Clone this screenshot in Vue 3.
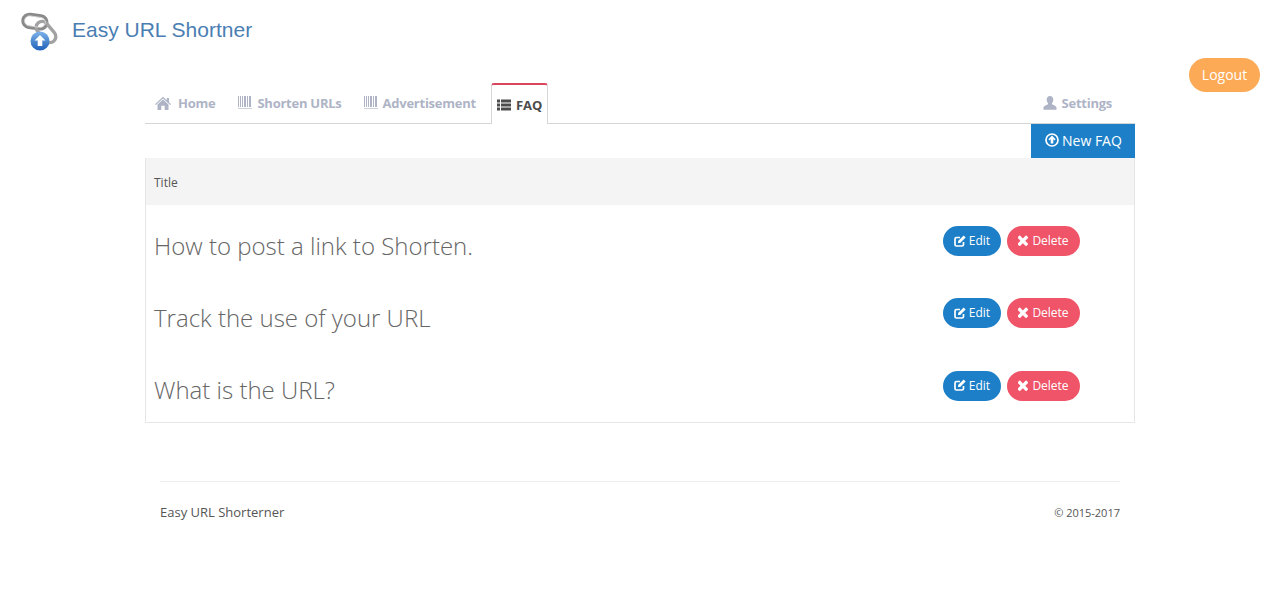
<script setup>
const tabs = [
  { label: 'Home', icon: 'home' },
  { label: 'Shorten URLs', icon: 'barcode' },
  { label: 'Advertisement', icon: 'barcode' },
  { label: 'FAQ', icon: 'list', active: true }
]

const faqs = ['How to post a link to Shorten.', 'Track the use of your URL', 'What is the URL?']

const bars = [
  [0, 1], [2, 1], [4, 1], [6, 2], [9, 1], [11, 2]
]
</script>

<template>
  <div class="page">
    <header class="brand">
      <svg class="logo" width="42" height="42" viewBox="0 0 42 42">
        <defs>
          <linearGradient id="ball" x1="0" y1="0" x2="0" y2="1">
            <stop offset="0" stop-color="#7fb2e8" />
            <stop offset="1" stop-color="#1e62b8" />
          </linearGradient>
        </defs>
        <rect x="3" y="4" width="24" height="13" rx="6.500" transform="rotate(8 14 10)" fill="none" stroke="#8a8a8a" stroke-width="3.400" />
        <rect x="14" y="15" width="24" height="12" rx="6" transform="rotate(50 26 21)" fill="none" stroke="#a2a2a2" stroke-width="3.400" />
        <rect x="4.500" y="5.500" width="21" height="10" rx="5" transform="rotate(8 14 10)" fill="none" stroke="#d8d8d8" stroke-width="0.800" />
        <circle cx="20" cy="30" r="9.500" fill="url(#ball)" />
        <path d="M20 24l5.500 5.500h-3.200V35h-4.600v-5.500H14.500z" fill="#fff" />
      </svg>
      <span class="brand-name">Easy URL Shortner</span>
    </header>

    <div class="layout">
      <div class="side"></div>
      <main class="main">
        <nav class="tabs">
          <a v-for="tab in tabs" :key="tab.label" class="tab" :class="{ active: tab.active, first: tab.icon === 'home' }">
            <svg v-if="tab.icon === 'home'" class="ico home" width="16" height="14" viewBox="0 0 16 14">
              <path fill="currentColor" d="M8 .8l3.800 3.500V2h2.200v4.300L16 8.200l-.8.800L8 2.600.8 9 0 8.200z" />
              <path fill="currentColor" d="M8 3.600l5.500 5V14H9.700V9.800H6.300V14H2.500V8.600z" />
            </svg>
            <svg v-else-if="tab.icon === 'barcode'" class="ico" width="14" height="14" viewBox="0 0 14 14">
              <rect v-for="b in bars" :key="b[0]" :x="b[0]" y="0" :width="b[1]" height="11" fill="currentColor" />
              <rect y="12" width="14" height="1" fill="currentColor" opacity="0.6" />
            </svg>
            <svg v-else class="ico" width="14" height="14" viewBox="0 0 14 14">
              <path fill="currentColor" d="M0 1.500h3v3H0zM4 1.500h10v3H4zM0 5.500h3v3H0zM4 5.500h10v3H4zM0 9.500h3v3H0zM4 9.500h10v3H4z" />
            </svg>
            {{ tab.label }}
          </a>
          <a class="tab settings">
            <svg class="ico" width="14" height="14" viewBox="0 0 14 14">
              <path fill="currentColor" d="M7 0c2 0 3.300 1.600 3.300 3.800 0 1.500-.6 2.800-1.300 3.500v1c1 .8 4.500 1.500 4.500 3.300v2.200H.5v-2.200c0-1.800 3.500-2.500 4.500-3.300v-1C4.300 6.600 3.700 5.300 3.700 3.800 3.700 1.600 5 0 7 0z" />
            </svg>
            Settings
          </a>
        </nav>

        <div class="actions">
          <button class="new-btn">
            <svg width="14" height="14" viewBox="0 0 14 14">
              <circle cx="7" cy="7" r="6" fill="none" stroke="currentColor" stroke-width="1.700" />
              <path fill="currentColor" d="M7 2.600l3.600 3.700-1.100 1.100-1.200-1.200v4.200H5.700V6.200L4.500 7.400 3.400 6.300z" />
            </svg>
            New FAQ
          </button>
        </div>

        <div class="table">
          <div class="thead">Title</div>
          <div v-for="faq in faqs" :key="faq" class="row">
            <div class="title">{{ faq }}</div>
            <div class="row-actions">
              <button class="pill edit">
                <svg width="12" height="12" viewBox="0 0 12 12">
                  <path fill="none" stroke="currentColor" stroke-width="1.700" d="M9.500 7v2.500a1.500 1.500 0 0 1-1.500 1.500H2.500A1.500 1.500 0 0 1 1 9.500V4a1.500 1.500 0 0 1 1.500-1.500H6" />
                  <path fill="currentColor" d="M9.600 .6l2 2-5.500 5.500H4.100V6.100z" />
                </svg>
                Edit
              </button>
              <button class="pill del">
                <svg width="11" height="11" viewBox="200 300 1150 1250">
                  <path fill="currentColor" d="M1298 1322q0 40-28 68l-136 136q-28 28-68 28t-68-28l-294-294-294 294q-28 28-68 28t-68-28l-136-136q-28-28-28-68t28-68l294-294-294-294q-28-28-28-68t28-68l136-136q28-28 68-28t68 28l294 294 294-294q28-28 68-28t68 28l136 136q28 28 28 68t-28 68l-294 294 294 294q28 28 28 68z" />
                </svg>
                Delete
              </button>
            </div>
          </div>
        </div>

        <footer class="footer">
          <span>Easy URL Shorterner</span>
          <span class="copy">© 2015-2017</span>
        </footer>
      </main>
      <div class="side right">
        <button class="logout">Logout</button>
      </div>
    </div>
  </div>
</template>

<style>
html,
body {
  margin: 0;
  background: #fff;
}
</style>

<style scoped>
.page {
  font-family: "Open Sans", sans-serif;
  color: #555;
  font-size: 13px;
  height: 600px;
  overflow: hidden;
}

.brand {
  display: flex;
  align-items: flex-start;
  height: 58px;
  padding: 11px 0 0 20px;
  box-sizing: border-box;
}

.logo {
  flex: none;
}

.brand-name {
  margin: 6px 0 0 10px;
  font-family: "Liberation Sans", Arial, sans-serif;
  font-size: 21px;
  line-height: 26px;
  color: #4a7eb3;
}

.layout {
  display: grid;
  grid-template-columns: 145px 990px 1fr;
}

.main {
  padding-top: 25px;
}

.right {
  display: flex;
  justify-content: flex-end;
  align-items: flex-start;
  padding-right: 20px;
}

.logout {
  width: 71px;
  height: 34px;
  padding: 0 0 2px;
  border: none;
  border-radius: 17px;
  background: #fcaa56;
  color: #fff;
  font: 14px "Open Sans", sans-serif;
}

.tabs {
  display: flex;
  height: 40px;
  border-bottom: 1px solid #d5d5d5;
}

.tab {
  display: flex;
  align-items: center;
  gap: 5px;
  height: 40px;
  padding: 0 11px;
  font-weight: 700;
  font-size: 13px;
  letter-spacing: -0.25px;
  color: #aeb4c6;
}

.tab.first {
  padding-left: 10px;
  padding-right: 12px;
}

.home {
  margin-right: 2px;
}

.tab.active {
  box-sizing: border-box;
  height: 41px;
  margin-left: 4px;
  padding: 0 5px;
  letter-spacing: 0;
  color: #4c4c4c;
  background: #fff;
  border: 1px solid #d5d5d5;
  border-top: 2px solid #d9485f;
  border-bottom: none;
  border-radius: 3px 3px 0 0;
}

.settings {
  margin-left: auto;
  padding-right: 23px;
}

.ico {
  flex: none;
}

.actions {
  display: flex;
  justify-content: flex-end;
}

.new-btn {
  display: flex;
  align-items: center;
  gap: 3px;
  width: 104px;
  height: 34px;
  padding: 0 0 2px 14px;
  border: none;
  background: #1c7fc7;
  color: #fff;
  font: 14px "Open Sans", sans-serif;
}

.table {
  border: 1px solid #e6e6e6;
  border-top: none;
}

.thead {
  height: 47px;
  padding-left: 8px;
  line-height: 49px;
  background: #f4f4f4;
  font-size: 12px;
}

.row {
  display: flex;
  align-items: center;
  justify-content: space-between;
  height: 72.3px;
  padding: 0 54px 0 8px;
  box-sizing: border-box;
}

.title {
  position: relative;
  top: 4px;
  font-size: 24px;
  font-weight: 300;
  color: #666;
}

.row-actions {
  display: flex;
  gap: 6px;
}

.pill {
  display: flex;
  align-items: center;
  justify-content: center;
  gap: 3px;
  height: 30px;
  padding: 0 0 1px;
  border: none;
  border-radius: 15px;
  color: #fff;
  font: 12px "Open Sans", sans-serif;
}

.edit {
  width: 58px;
  background: #1c7fc7;
}

.del {
  width: 73px;
  background: #ef5468;
}

.footer {
  display: flex;
  justify-content: space-between;
  align-items: center;
  margin: 58px 15px 0;
  padding-top: 21px;
  border-top: 1px solid #eee;
  font-size: 13px;
}

.copy {
  padding-top: 1px;
  font-size: 11px;
}
</style>
